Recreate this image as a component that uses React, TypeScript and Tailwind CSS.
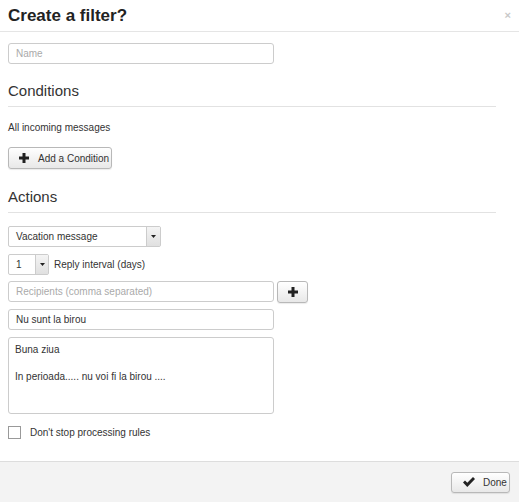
import { useState } from "react";

function Caret() {
  return (
    <svg width="5" height="3" viewBox="0 0 5 3" className="block">
      <path d="M0 0h5L2.5 3z" fill="#222" />
    </svg>
  );
}

function PlusIcon() {
  return (
    <svg width="10" height="10" viewBox="0 0 10 10" className="block">
      <path d="M3.5 0h3v3.5H10v3H6.5V10h-3V6.5H0v-3h3.5z" fill="#222" />
    </svg>
  );
}

function CheckIcon() {
  return (
    <svg width="12" height="10" viewBox="0 0 12 10" className="block">
      <path d="M0 5.5l2-2 2.3 2.3L10 0l2 2-7.7 8z" fill="#222" />
    </svg>
  );
}

const inputCls =
  "h-[21px] w-[266px] rounded-[3px] border border-[#cccccc] bg-white px-[7px] text-[10px] text-[#333] outline-none placeholder:text-[#aaaaaa]";

const btnCls =
  "flex items-center whitespace-nowrap rounded-[3px] border border-[#b8b8b8] bg-gradient-to-b from-white to-[#e8e8e8] text-[10px] text-[#333] shadow-[0_1px_1px_rgba(0,0,0,0.08)]";

export default function App() {
  const [name, setName] = useState("");
  const [subject, setSubject] = useState("Nu sunt la birou");
  const [body, setBody] = useState("Buna ziua\n\nIn perioada..... nu voi fi la birou ....");
  const [keepGoing, setKeepGoing] = useState(false);

  return (
    <div
      className="flex h-[502px] w-[519px] flex-col bg-white text-[#333]"
      style={{ fontFamily: '"Liberation Sans", Arial, sans-serif' }}
    >
      {/* header */}
      <div className="flex h-[32px] items-center justify-between border-b border-[#e5e5e5] pl-[8px] pr-[8px]">
        <h3 className="text-[17px] font-bold leading-none text-[#222]">Create a filter?</h3>
        <span className="text-[11px] font-bold leading-none text-[#c8c8c8]">×</span>
      </div>

      {/* body */}
      <div className="flex flex-1 flex-col pl-[8px] pr-[23px]">
        <input
          className={`${inputCls} mt-[11px]`}
          placeholder="Name"
          value={name}
          onChange={(e) => setName(e.target.value)}
        />

        <h4 className="mt-[17px] text-[15px] leading-[19px] text-[#333]">Conditions</h4>
        <div className="mt-[6px] border-b border-[#e2e2e2]" />
        <p className="mt-[15px] text-[10px] leading-[12px]">All incoming messages</p>
        <button className={`${btnCls} mt-[13px] h-[22px] w-[104px] gap-[9px] pl-[10px]`}>
          <PlusIcon />
          <span>Add a Condition</span>
        </button>

        <h4 className="mt-[18px] text-[15px] leading-[19px] text-[#333]">Actions</h4>
        <div className="mt-[6px] border-b border-[#e2e2e2]" />

        <div className="mt-[13px] flex h-[21px] w-[153px] items-stretch rounded-[2px] border border-[#cccccc] bg-white">
          <span className="flex flex-1 items-center pl-[7px] text-[10px]">Vacation message</span>
          <span className="flex w-[14px] items-center justify-center border-l border-[#cccccc] bg-gradient-to-b from-[#f4f4f4] to-[#e0e0e0]">
            <Caret />
          </span>
        </div>

        <div className="mt-[7px] flex items-center gap-[5px]">
          <div className="flex h-[21px] w-[41px] items-stretch rounded-[2px] border border-[#cccccc] bg-white">
            <span className="flex flex-1 items-center pl-[7px] text-[10px]">1</span>
            <span className="flex w-[13px] items-center justify-center border-l border-[#cccccc] bg-gradient-to-b from-[#f4f4f4] to-[#e0e0e0]">
              <Caret />
            </span>
          </div>
          <span className="text-[10px]">Reply interval (days)</span>
        </div>

        <div className="mt-[6px] flex items-start gap-[3px]">
          <input className={inputCls} placeholder="Recipients (comma separated)" />
          <button className={`${btnCls} h-[22px] w-[31px] justify-center`}>
            <PlusIcon />
          </button>
        </div>

        <input
          className={`${inputCls} mt-[6px]`}
          value={subject}
          onChange={(e) => setSubject(e.target.value)}
        />

        <textarea
          className="mt-[7px] h-[77px] w-[266px] resize-none rounded-[3px] border border-[#cccccc] bg-white px-[6px] py-[5px] text-[10px] leading-[13.5px] text-[#333] outline-none"
          value={body}
          onChange={(e) => setBody(e.target.value)}
        />

        <label className="mt-[11px] flex items-center gap-[9px] text-[10px]">
          <input
            type="checkbox"
            className="h-[13px] w-[13px] appearance-none border border-[#999] bg-white"
            checked={keepGoing}
            onChange={(e) => setKeepGoing(e.target.checked)}
          />
          <span>Don't stop processing rules</span>
        </label>
      </div>

      {/* footer */}
      <div className="flex h-[41px] items-center justify-end border-t border-[#dddddd] bg-[#f3f3f3] pr-[9px]">
        <button className={`${btnCls} h-[21px] w-[59px] gap-[8px] pl-[11px]`}>
          <CheckIcon />
          <span>Done</span>
        </button>
      </div>
    </div>
  );
}
